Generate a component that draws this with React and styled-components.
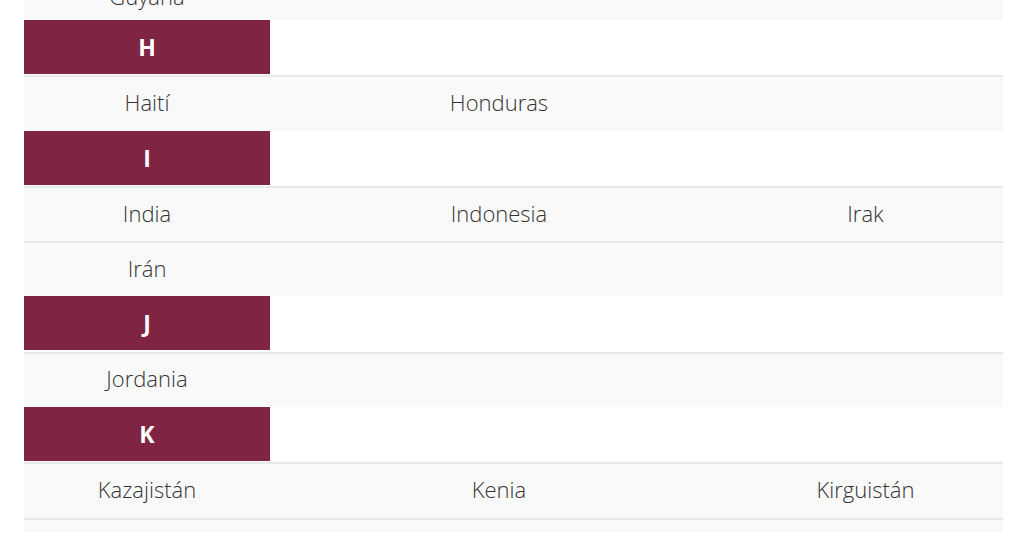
import React from 'react'
import styled, { createGlobalStyle } from 'styled-components'

const GlobalStyle = createGlobalStyle`
    body {
        margin: 0;
        background: #fff;
        font-family: "Open Sans", "Liberation Sans", sans-serif;
        overflow: hidden;
    }
`

const sections = [
    { letter: 'H', countries: ['Haití', 'Honduras'] },
    { letter: 'I', countries: ['India', 'Indonesia', 'Irak', 'Irán'] },
    { letter: 'J', countries: ['Jordania'] },
    { letter: 'K', countries: ['Kazajistán', 'Kenia', 'Kirguistán'] },
]

const chunk = (list, size) => {
    const rows = []
    for (let i = 0; i < list.length; i += size) rows.push(list.slice(i, i + size))
    return rows
}

const App = () => {
    return (
        <>
            <GlobalStyle />
            <Wrapper>
                <Table>
                    {/* last row of the G section, scrolled mostly out of view */}
                    <Row bordered lead>
                        <Cell>Guyana</Cell>
                        <Cell />
                        <Cell />
                    </Row>
                    {sections.map(section => (
                        <React.Fragment key={ section.letter }>
                            <HeadRow>
                                <Letter>{ section.letter }</Letter>
                                <Blank />
                                <Blank />
                            </HeadRow>
                            {chunk(section.countries, 3).map((row, index) => (
                                <Row key={ index } bordered>
                                    {[0, 1, 2].map(i => (
                                        <Cell key={ i }>{ row[i] || '' }</Cell>
                                    ))}
                                </Row>
                            ))}
                        </React.Fragment>
                    ))}
                    <Footer />
                </Table>
            </Wrapper>
        </>
    )
}

const Wrapper = styled.div`
    padding: 0 17px 0 24px;
    margin-top: -35.3px;
`

const Table = styled.div`
    width: 979px;
    display: flex;
    flex-direction: column;
`

const Row = styled.div`
    display: grid;
    grid-template-columns: 246px 458px 1fr;
    height: 55.3px;
    box-sizing: border-box;
    padding-top: ${ props => props.lead ? '9px' : '0' };
    background: #f9f9f9;
    border-top: ${ props => props.bordered ? '2px solid #e8e8e8' : 'none' };
`

const HeadRow = styled.div`
    display: grid;
    grid-template-columns: 246px 458px 1fr;
    height: 55.3px;
    background: #fff;
`

const Cell = styled.div`
    display: flex;
    align-items: center;
    justify-content: center;
    padding-bottom: 4px;
    font-size: 22px;
    font-weight: 300;
    color: #333;
`

const Letter = styled.div`
    display: flex;
    align-items: center;
    justify-content: center;
    height: 54px;
    background: #7f2442;
    color: #fff;
    font-size: 23px;
    font-weight: 700;
`

const Blank = styled.div``

const Footer = styled.div`
    height: 12px;
    background: #f9f9f9;
    border-top: 2px solid #e8e8e8;
`

export default App
